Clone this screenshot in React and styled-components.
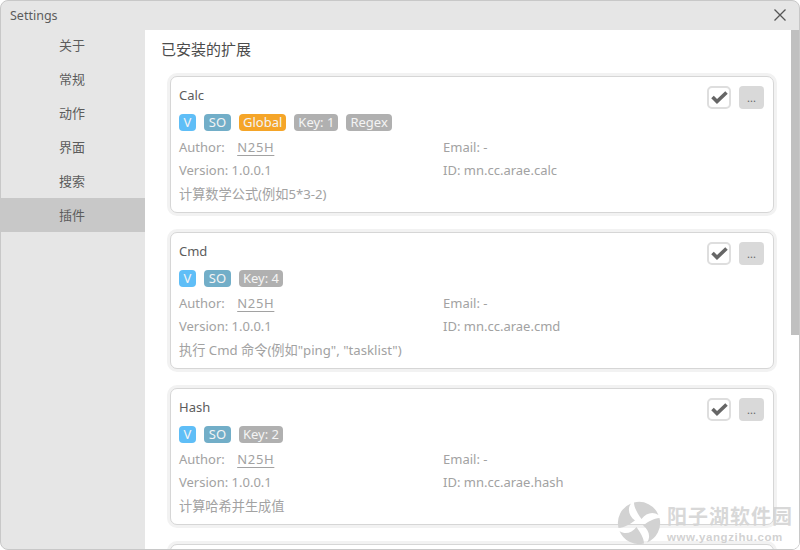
import React from "react";
import styled, { createGlobalStyle } from "styled-components";

const Global = createGlobalStyle`
  html, body { margin: 0; padding: 0; background: #fff; }
  #root { width: 800px; height: 550px; }
`;

const Window = styled.div`
  position: relative;
  box-sizing: border-box;
  width: 800px;
  height: 550px;
  display: flex;
  flex-direction: column;
  overflow: hidden;
  background: #e6e6e6;
  border: 1px solid #c8c8c8;
  border-radius: 8px;
  font-family: "Noto Sans", "Noto Sans CJK SC", sans-serif;
`;

const TitleBar = styled.div`
  flex: none;
  height: 29px;
  display: flex;
  align-items: center;
  justify-content: space-between;
  padding: 0 7px 0 9px;
  font-size: 12.5px;
  color: #5c5c5c;
`;

const CloseButton = styled.div`
  width: 24px;
  height: 24px;
  margin-top: -2px;
  display: flex;
  align-items: center;
  justify-content: center;
`;

const Body = styled.div`
  flex: 1;
  min-height: 0;
  display: flex;
`;

const Sidebar = styled.nav`
  flex: none;
  width: 144px;
  margin-top: -2px;
  display: flex;
  flex-direction: column;
`;

const NavItem = styled.div`
  height: 34px;
  line-height: 34px;
  padding-left: 58px;
  font-size: 13px;
  color: #5c5c5c;
  background: ${(p) => (p.$active ? "#c8c8c8" : "transparent")};
`;

const Main = styled.main`
  flex: 1;
  min-width: 0;
  display: flex;
  background: #fff;
`;

const Content = styled.div`
  flex: 1;
  min-width: 0;
  overflow: hidden;
  padding: 9px 0 0 16px;
`;

const Heading = styled.h1`
  margin: 0 0 16px;
  font-size: 15px;
  line-height: 21px;
  font-weight: 400;
  color: #4c4c4c;
`;

const CardList = styled.div`
  display: flex;
  flex-direction: column;
  gap: 19px;
  margin-left: 9px;
  width: 604px;
`;

const Card = styled.section`
  box-sizing: border-box;
  flex: none;
  height: 137px;
  position: relative;
  padding: 8px 8px 0;
  background: #fff;
  border: 1px solid #d6d6d6;
  border-radius: 7px;
  box-shadow: 0 0 0 3px #f2f2f2;
`;

const CardTitle = styled.div`
  font-size: 13px;
  line-height: 21px;
  color: #5c5c5c;
`;

const Badges = styled.div`
  display: flex;
  gap: 8px;
  margin-top: 8px;
`;

const Badge = styled.span`
  box-sizing: border-box;
  height: 17px;
  min-width: ${(p) => p.$min || 0}px;
  line-height: 17px;
  padding: 0 4px;
  border-radius: 4px;
  font-size: 13px;
  text-align: center;
  color: #f4f4f4;
  background: ${(p) => p.$color};
`;

const Meta = styled.div`
  display: grid;
  grid-template-columns: 264px 1fr;
  margin-top: 5px;
  font-size: 13px;
  line-height: 23px;
  color: #a2a2a2;
`;

const AuthorLink = styled.span`
  margin-left: 9px;
  letter-spacing: 0.7px;
  text-decoration: underline;
  text-underline-offset: 3px;
`;

const Description = styled.div`
  grid-column: 1 / -1;
  margin-top: 1px;
  font-size: 13.2px;
`;

const Actions = styled.div`
  position: absolute;
  top: 9px;
  right: 9px;
  display: flex;
  gap: 8px;
`;

const Check = styled.div`
  box-sizing: border-box;
  width: 24px;
  height: 23px;
  display: flex;
  align-items: center;
  justify-content: center;
  border: 2px solid #dedede;
  border-radius: 5px;
  background: #fff;
`;

const More = styled.div`
  width: 25px;
  height: 23px;
  border-radius: 4px;
  background: #d9d9d9;
  color: #666;
  font-size: 11px;
  line-height: 24px;
  text-align: center;
`;

const Scrollbar = styled.div`
  flex: none;
  width: 12px;
  display: flex;
  justify-content: flex-end;
  background: #fff;
`;

const Thumb = styled.div`
  position: relative;
  width: 8px;
  height: 305px;
  background: #c0c0c0;
`;

const GripMarks = styled.div`
  position: absolute;
  right: -1px;
  top: 32px;
  width: 1px;
  height: 11px;
  background: repeating-linear-gradient(#888 0 1px, #ececec 1px 4px);
`;

const Watermark = styled.div`
  position: absolute;
  right: 6px;
  bottom: 4px;
  display: flex;
  align-items: center;
  gap: 6px;
  pointer-events: none;
`;

const WatermarkText = styled.div`
  display: flex;
  flex-direction: column;
`;

const WatermarkName = styled.div`
  font-size: 20px;
  line-height: 27px;
  font-weight: 700;
  letter-spacing: 1px;
  color: rgba(212, 212, 212, 0.92);
`;

const WatermarkUrl = styled.div`
  font-family: "Liberation Sans", sans-serif;
  font-size: 11.5px;
  line-height: 14px;
  font-weight: 700;
  letter-spacing: 0.6px;
  color: rgba(205, 205, 205, 0.92);
`;

const plugins = [
  { title: "Calc", id: "mn.cc.arae.calc", desc: "计算数学公式(例如5*3-2)", badges: [["V", "#5fbef7", 17], ["SO", "#72aec8", 27], ["Global", "#f5a528"], ["Key: 1", "#b0b0b0"], ["Regex", "#b0b0b0", 45]] },
  { title: "Cmd", id: "mn.cc.arae.cmd", desc: "执行 Cmd 命令(例如\"ping\", \"tasklist\")", badges: [["V", "#5fbef7", 17], ["SO", "#72aec8", 27], ["Key: 4", "#b0b0b0"]] },
  { title: "Hash", id: "mn.cc.arae.hash", desc: "计算哈希并生成值", badges: [["V", "#5fbef7", 17], ["SO", "#72aec8", 27], ["Key: 2", "#b0b0b0"]] },
];

const nav = ["关于", "常规", "动作", "界面", "搜索", "插件"];

const CheckIcon = () => (
  <svg width="19" height="19" viewBox="0 0 19 19">
    <path d="M2.5 9 L7 13.5 L16.5 4.5" fill="none" stroke="#666" strokeWidth="3.6" />
  </svg>
);

const CloseIcon = () => (
  <svg width="12" height="12" viewBox="0 0 12 12">
    <path d="M0.5 0.5 L11.5 11.5 M11.5 0.5 L0.5 11.5" stroke="#555" strokeWidth="1.3" fill="none" />
  </svg>
);

const Logo = () => (
  <svg width="44" height="44" viewBox="-22 -22 44 44">
    {[0, 90, 180, 270].map((a) => (
      <path
        key={a}
        transform={`rotate(${a})`}
        d="M-5 -20.5 A21 21 0 0 1 19.5 -8 C14 -12 7 -10 2.5 -4 C-1 -9 -5 -15 -5 -20.5 Z"
        fill="#d2d2d2"
      />
    ))}
  </svg>
);

export default function App() {
  return (
    <>
      <Global />
      <Window>
        <TitleBar>
          <span>Settings</span>
          <CloseButton>
            <CloseIcon />
          </CloseButton>
        </TitleBar>
        <Body>
          <Sidebar>
            {nav.map((n) => (
              <NavItem key={n} $active={n === "插件"}>{n}</NavItem>
            ))}
          </Sidebar>
          <Main>
            <Content>
              <Heading>已安装的扩展</Heading>
              <CardList>
                {plugins.map((p) => (
                  <Card key={p.title}>
                    <CardTitle>{p.title}</CardTitle>
                    <Actions>
                      <Check><CheckIcon /></Check>
                      <More>...</More>
                    </Actions>
                    <Badges>
                      {p.badges.map(([t, c, m]) => (
                        <Badge key={t} $color={c} $min={m}>{t}</Badge>
                      ))}
                    </Badges>
                    <Meta>
                      <div>Author: <AuthorLink>N25H</AuthorLink></div>
                      <div>Email: -</div>
                      <div>Version: 1.0.0.1</div>
                      <div>ID: {p.id}</div>
                      <Description>{p.desc}</Description>
                    </Meta>
                  </Card>
                ))}
                <Card />
              </CardList>
            </Content>
            <Scrollbar>
              <Thumb><GripMarks /></Thumb>
            </Scrollbar>
          </Main>
        </Body>
        <Watermark>
          <Logo />
          <WatermarkText>
            <WatermarkName>阳子湖软件园</WatermarkName>
            <WatermarkUrl>www.yangzihu.com</WatermarkUrl>
          </WatermarkText>
        </Watermark>
      </Window>
    </>
  );
}
